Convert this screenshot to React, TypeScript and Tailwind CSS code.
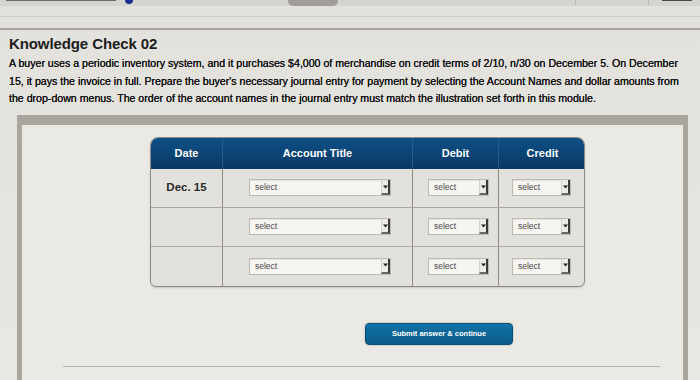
import React from 'react';

const font = { fontFamily: '"Liberation Sans", Arial, sans-serif' };

function Select({ w }: { w: string }) {
  return (
    <div className={`${w} h-[17px] flex items-stretch bg-[#f6f5f2] border border-[#bdbab4] shadow-[inset_0_1px_1px_rgba(0,0,0,0.08)]`}>
      <span className="flex-1 pl-[5px] text-[8.5px] leading-[15px] text-[#4a4946]">select</span>
      <span className="w-[9px] flex items-center justify-center bg-[#ecebe7] border-l border-[#d3d1cc] border-r-2 border-b-2 border-r-[#3b3a38] border-b-[#6a6864]">
        <svg width="5" height="4" viewBox="0 0 5 4"><path d="M0 0.5h5L2.5 3.5z" fill="#222" /></svg>
      </span>
    </div>
  );
}

function Row({ date, last }: { date?: string; last?: boolean }) {
  return (
    <div className={`grid grid-cols-[72px_190px_86px_87px] h-[39px] ${last ? '' : 'border-b border-[#a9a6a0]'}`}>
      <div className="flex items-center justify-center border-r border-[#8f8c86] text-[11.5px] font-bold text-[#2a2a2a]">{date}</div>
      <div className="flex items-center pl-[26px] border-r border-[#8f8c86]"><Select w="w-[142px]" /></div>
      <div className="flex items-center pl-[15px] border-r border-[#8f8c86]"><Select w="w-[61px]" /></div>
      <div className="flex items-center pl-[13px]"><Select w="w-[59px]" /></div>
    </div>
  );
}

export default function App() {
  return (
    <div style={font} className="w-[700px] h-[380px] overflow-hidden bg-gradient-to-b from-[#e3e1dc] to-[#e9e7e2] text-[#1e1e1e]">
      {/* cut-off previous screen strip */}
      <div className="relative h-[30px] border-b-2 border-[#a6a39e]">
        <div className="absolute left-0 top-0 right-0 h-[6px] bg-[#d6d4cf]" />
        <div className="absolute left-[6px] top-[-3px] w-[110px] h-[4px] bg-[#6f6d69]" />
        <div className="absolute left-[125px] top-[-4px] w-[8px] h-[8px] rounded-full bg-[#1b2d8c]" />
        <div className="absolute left-[288px] top-[-4px] w-[50px] h-[10px] rounded-[5px] bg-[#a19e99]" />
        <div className="absolute left-[575px] top-0 w-px h-[5px] bg-[#b8b5b0]" />
        <div className="absolute left-[648px] top-0 w-px h-[5px] bg-[#b8b5b0]" />
        <div className="absolute left-[662px] top-[-3px] w-[30px] h-[4px] bg-[#4a4946]" />
        <div className="absolute left-0 right-0 top-[16px] h-px bg-[#cfcdc8]" />
      </div>

      <div className="px-[9px] pt-[4px]">
        <h1 className="text-[15px] font-bold leading-[20px] text-[#1c1c1c] tracking-[-0.1px]">Knowledge Check 02</h1>
        <div className="mt-[1px] text-[10.6px] leading-[17.5px] text-[#161616] whitespace-nowrap [text-shadow:0_0_0.5px_#000]">
          <p>A buyer uses a periodic inventory system, and it purchases $4,000 of merchandise on credit terms of 2/10, n/30 on December 5. On December</p>
          <p>15, it pays the invoice in full. Prepare the buyer's necessary journal entry for payment by selecting the Account Names and dollar amounts from</p>
          <p>the drop-down menus. The order of the account names in the journal entry must match the illustration set forth in this module.</p>
        </div>
      </div>

      <div className="mt-[7px] ml-[17px] w-[671px] h-[280px] border-x-[5px] border-t-[10px] border-[#aaa59e] bg-[#ebe9e4]">
        <div className="ml-[128px] mt-[12px] w-[435px] rounded-t-[8px] rounded-b-[6px] border border-[#8f8c86] bg-[#e3e1dc] overflow-hidden shadow-[0_1px_2px_rgba(0,0,0,0.15)]">
          <div className="grid grid-cols-[72px_190px_86px_87px] h-[31px] bg-gradient-to-b from-[#0e4f85] to-[#083966] text-white text-[11px] font-bold">
            <div className="flex items-center justify-center border-r border-[#2a5a85]">Date</div>
            <div className="flex items-center justify-center border-r border-[#2a5a85]">Account Title</div>
            <div className="flex items-center justify-center border-r border-[#2a5a85]">Debit</div>
            <div className="flex items-center justify-center">Credit</div>
          </div>
          <Row date="Dec. 15" />
          <Row />
          <Row last />
        </div>

        <div className="ml-[343px] mt-[36px] w-[148px] h-[22px] rounded-[4px] bg-gradient-to-b from-[#1273a6] to-[#0a5a88] border border-[#0a4c73] shadow-[0_0_2px_rgba(0,0,0,0.3)] flex items-center justify-center text-white text-[7.5px] font-bold">
          Submit answer &amp; continue
        </div>

        <div className="ml-[41px] mt-[21px] w-[597px] h-px bg-[#b4b1ab]" />
      </div>
    </div>
  );
}
